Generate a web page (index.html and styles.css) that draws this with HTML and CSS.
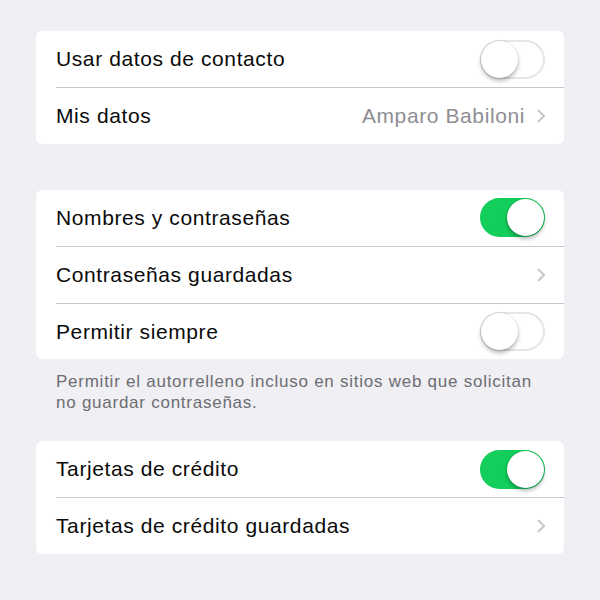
FILE: index.html
```html
<!DOCTYPE html>
<html lang="es">
<head>
<meta charset="utf-8">
<link rel="stylesheet" href="styles.css">
</head>
<body>
<div class="page">
  <section class="group">
    <div class="row">
      <span class="label">Usar datos de contacto</span>
      <span class="switch"><span class="knob"></span></span>
    </div>
    <div class="row">
      <span class="label">Mis datos</span>
      <span class="value">Amparo Babiloni</span>
      <svg class="chev" viewBox="0 0 8 14" width="8" height="14"><path d="M1 1l6 6-6 6" fill="none" stroke="#c7c7cc" stroke-width="2"/></svg>
    </div>
  </section>

  <section class="group">
    <div class="row">
      <span class="label">Nombres y contraseñas</span>
      <span class="switch on"><span class="knob"></span></span>
    </div>
    <div class="row">
      <span class="label">Contraseñas guardadas</span>
      <svg class="chev" viewBox="0 0 8 14" width="8" height="14"><path d="M1 1l6 6-6 6" fill="none" stroke="#c7c7cc" stroke-width="2"/></svg>
    </div>
    <div class="row">
      <span class="label">Permitir siempre</span>
      <span class="switch"><span class="knob"></span></span>
    </div>
  </section>
  <p class="footer">Permitir el autorrelleno incluso en sitios web que solicitan no guardar contraseñas.</p>

  <section class="group">
    <div class="row">
      <span class="label">Tarjetas de crédito</span>
      <span class="switch on"><span class="knob"></span></span>
    </div>
    <div class="row">
      <span class="label">Tarjetas de crédito guardadas</span>
      <svg class="chev" viewBox="0 0 8 14" width="8" height="14"><path d="M1 1l6 6-6 6" fill="none" stroke="#c7c7cc" stroke-width="2"/></svg>
    </div>
  </section>
</div>
</body>
</html>
```

FILE: styles.css
```css
html, body {
  margin: 0;
  padding: 0;
  background: #efeff4;
}
body {
  font-family: "Liberation Sans", Arial, sans-serif;
  color: #000;
}
.page {
  width: 600px;
  height: 600px;
  padding: 31px 36px 0;
  box-sizing: border-box;
  display: flex;
  flex-direction: column;
}
.group {
  background: #fff;
  border-radius: 6px;
  overflow: hidden;
  margin-bottom: 46px;
}
.row {
  height: 56px;
  display: flex;
  align-items: center;
  margin-left: 20px;
  padding-right: 19px;
  box-sizing: border-box;
  position: relative;
}
.row + .row {
  border-top: 1px solid #c8c7cc;
  height: 57px;
}
.label {
  font-size: 21px;
  flex: 1;
  letter-spacing: 0.6px;
  color: #0a0a0a;
}
.value {
  font-size: 21px;
  color: #8e8e93;
  margin-right: 12px;
  letter-spacing: 0.6px;
}
.chev {
  display: block;
}
.switch {
  width: 65px;
  height: 39px;
  border-radius: 20px;
  box-sizing: border-box;
  border: 2px solid #e5e5ea;
  background: #fff;
  position: relative;
}
.switch .knob {
  position: absolute;
  top: -1px;
  left: -1px;
  width: 37px;
  height: 37px;
  border-radius: 50%;
  background: #fff;
  box-shadow: 0 3px 4px rgba(0,0,0,0.28), 0 0 0 1px rgba(0,0,0,0.06);
}
.switch.on {
  background: #13ce5b;
  border-color: #13ce5b;
}
.switch.on .knob {
  left: auto;
  right: -1px;
}
.footer {
  margin: -33px 20px 28px;
  font-size: 17px;
  line-height: 20.5px;
  color: #6d6d72;
  letter-spacing: 0.75px;
}
```
